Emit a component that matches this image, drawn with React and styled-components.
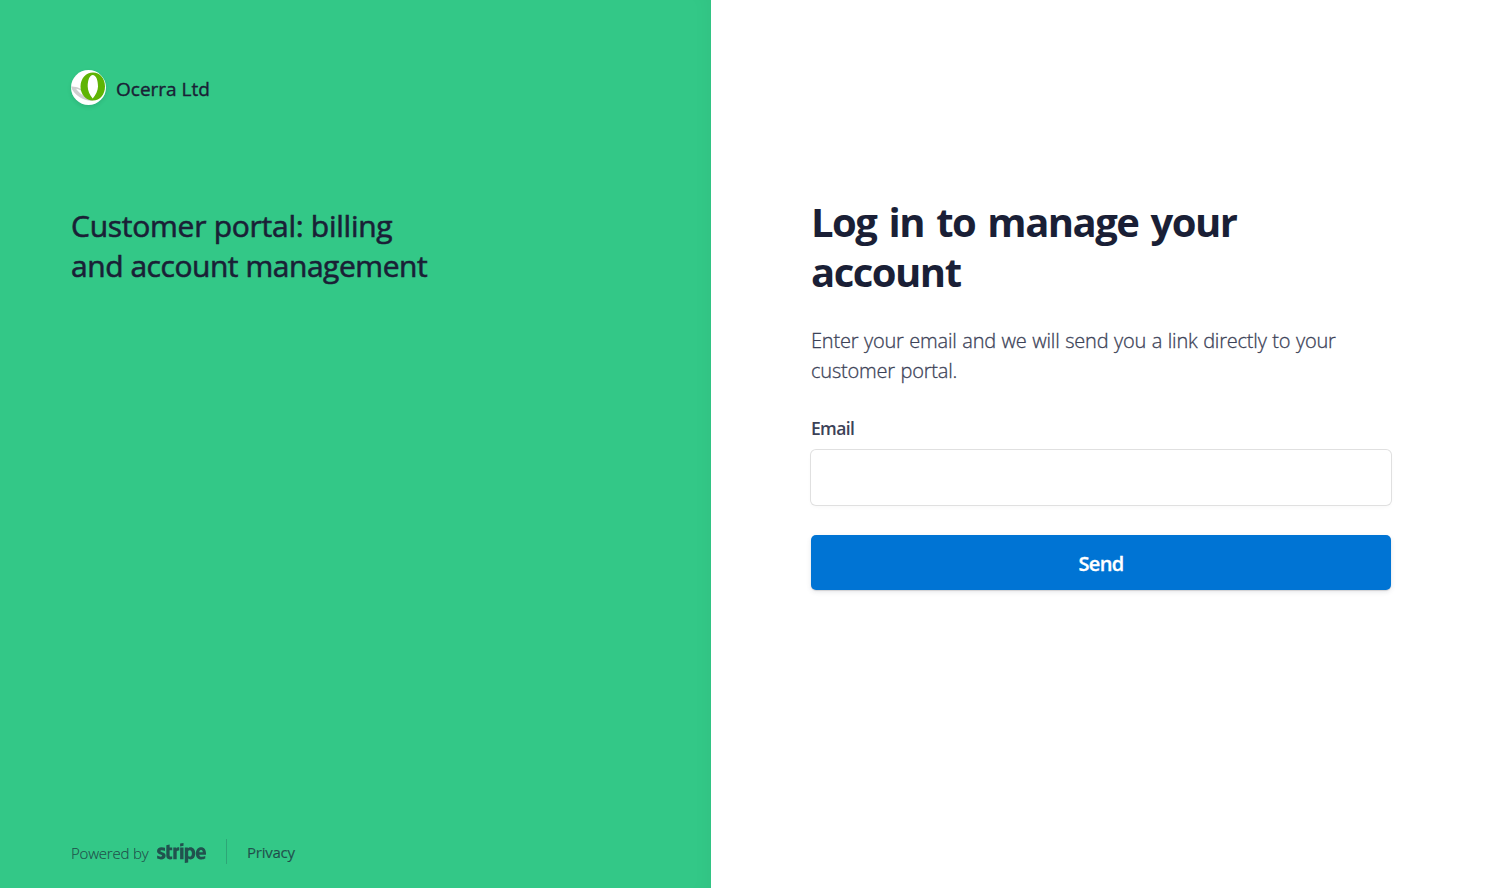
import React, { useState } from "react";
import styled, { createGlobalStyle } from "styled-components";
import { FaStripe } from "react-icons/fa";

const GlobalStyle = createGlobalStyle`
    * {
        box-sizing: border-box;
    }
    body {
        margin: 0;
        font-family: "Segoe UI", "Open Sans", "Noto Sans", sans-serif;
        color: #1a1f36;
        background: #ffffff;
    }
`;

export default function App() {
    const [email, setEmail] = useState("");
    const onSubmit = (e) => {
        e.preventDefault();
    };
    return (
        <>
            <GlobalStyle />
            <Page>
                <Aside>
                    <Brand>
                        <Avatar>
                            <OcerraLogo />
                        </Avatar>
                        <BrandName>Ocerra Ltd</BrandName>
                    </Brand>
                    <Tagline>
                        Customer portal: billing
                        <br />
                        <TaglineEnd>and account management</TaglineEnd>
                    </Tagline>
                    <Footer>
                        <Powered>Powered by</Powered>
                        <StripeMark />
                        <Divider />
                        <Privacy href="#">Privacy</Privacy>
                    </Footer>
                </Aside>
                <Main>
                    <Form onSubmit={onSubmit}>
                        <Title>
                            Log in to manage your
                            <br />
                            account
                        </Title>
                        <Text>
                            Enter your email and we will send you a link directly to your
                            <br />
                            customer portal.
                        </Text>
                        <Label htmlFor="email">Email</Label>
                        <Input
                            id="email"
                            type="email"
                            value={email}
                            onChange={(e) => setEmail(e.target.value)}
                        />
                        <Button type="submit">Send</Button>
                    </Form>
                </Main>
            </Page>
        </>
    );
}

function OcerraLogo() {
    return (
        <svg width="35" height="35" viewBox="0 0 35 35">
            <path
                fill="#cfcfcf"
                fillRule="evenodd"
                d="M0 16.5C5 16 12 19 16 23c3 2.500 5 5.500 6 8C13 31 2 25 0 16.500zM5 18.800c3 4.200 8 8 14 9.700C16 24 11 20 5 18.800z"
            />
            <path
                fill="#5fb404"
                fillRule="evenodd"
                d="M22 2.500c7 0 12 6 12 14s-5 14-12 14-12.500-6-12.500-14 5.500-14 12.500-14zM21.700 5c-3 0-5 5-5 11.500 0 4 2 8.500 5 12 3-3.500 5.300-8 5.300-12C27 10 25 5 21.700 5z"
            />
        </svg>
    );
}

const Page = styled.div`
    display: flex;
    height: 100vh;
`;

const Aside = styled.aside`
    display: flex;
    flex-direction: column;
    width: 711px;
    padding: 70px 71px 23px;
    background: #33c887;
    box-shadow: inset -15px 0 20px -14px rgba(0, 0, 0, 0.04);
`;

const Brand = styled.div`
    display: flex;
    align-items: center;
    gap: 10px;
    height: 35px;
`;

const Avatar = styled.div`
    display: flex;
    width: 35px;
    height: 35px;
    border-radius: 50%;
    overflow: hidden;
    background: #ffffff;
    box-shadow: 0 2px 4px rgba(0, 0, 0, 0.1);
`;

const BrandName = styled.span`
    padding-top: 3px;
    font-size: 19px;
    font-weight: 500;
    line-height: 24px;
    -webkit-text-stroke: 0.4px currentColor;
`;

const Tagline = styled.h2`
    margin: 101px 0 0;
    font-size: 30px;
    font-weight: 500;
    line-height: 40px;
    letter-spacing: -0.26px;
    white-space: nowrap;
    -webkit-text-stroke: 0.6px currentColor;
`;

const TaglineEnd = styled.span`
    letter-spacing: -0.46px;
`;

const Footer = styled.footer`
    display: flex;
    align-items: center;
    height: 28px;
    margin-top: auto;
    font-size: 15px;
    color: rgba(26, 31, 54, 0.7);
`;

const Powered = styled.span`
    width: 86px;
    padding-top: 3px;
    font-weight: 300;
    letter-spacing: -0.2px;
    -webkit-text-stroke: 0.2px currentColor;
`;

const StripeMark = styled(FaStripe)`
    width: 49px;
    height: 40px;
    margin-top: 3px;
`;

const Divider = styled.span`
    width: 1px;
    height: 25px;
    margin: 0 20px;
    background: rgba(26, 31, 54, 0.2);
`;

const Privacy = styled.a`
    padding-top: 1px;
    color: inherit;
    letter-spacing: -0.25px;
    text-decoration: none;
    -webkit-text-stroke: 0.2px currentColor;
`;

const Main = styled.main`
    flex: 1;
    padding: 197px 100px 0;
`;

const Form = styled.form`
    display: flex;
    flex-direction: column;
    width: 580px;
`;

const Title = styled.h1`
    margin: 0;
    font-size: 40px;
    font-weight: 700;
    line-height: 50px;
    letter-spacing: -1.5px;
    word-spacing: 3.200px;
    white-space: nowrap;
`;

const Text = styled.p`
    margin: 29px 0 0;
    font-size: 20px;
    font-weight: 300;
    line-height: 30px;
    letter-spacing: -0.2px;
    word-spacing: 0.650px;
    color: #3c4257;
    white-space: nowrap;
    -webkit-text-stroke: 0.3px currentColor;
`;

const Label = styled.label`
    margin-top: 30px;
    font-size: 17.500px;
    font-weight: 600;
    line-height: 25px;
    letter-spacing: -0.65px;
    color: #3c4257;
`;

const Input = styled.input`
    height: 55px;
    margin-top: 9px;
    padding: 0 20px;
    border: 0;
    border-radius: 5px;
    outline: none;
    font: inherit;
    font-size: 20px;
    box-shadow: 0 0 0 1px #e0e0e0, 0 2px 4px rgba(0, 0, 0, 0.03);
`;

const Button = styled.button`
    height: 55px;
    margin-top: 30px;
    padding-top: 3px;
    border: 0;
    border-radius: 5px;
    background: #0074d4;
    color: #ffffff;
    font-family: inherit;
    font-size: 20px;
    font-weight: 600;
    letter-spacing: -0.7px;
    -webkit-text-stroke: 0.3px currentColor;
    box-shadow: 0 1px 1px rgba(0, 0, 0, 0.12), 0 2px 5px rgba(60, 66, 87, 0.12);
`;
